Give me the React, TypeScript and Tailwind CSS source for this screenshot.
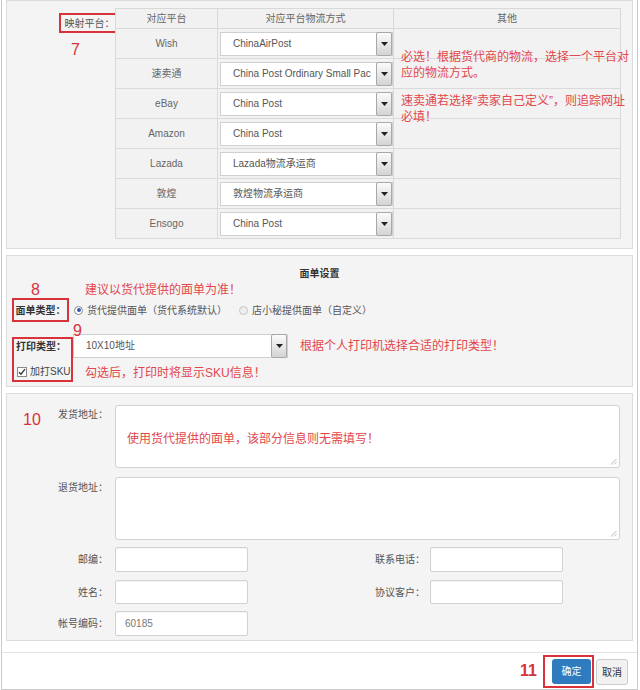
import React from "react";

const rows: [string, string][] = [
  ["Wish", "ChinaAirPost"],
  ["速卖通", "China Post Ordinary Small Pac"],
  ["eBay", "China Post"],
  ["Amazon", "China Post"],
  ["Lazada", "Lazada物流承运商"],
  ["敦煌", "敦煌物流承运商"],
  ["Ensogo", "China Post"],
];

function Caret() {
  return (
    <svg width="7" height="4" viewBox="0 0 7 4">
      <path d="M0 0h7L3.5 4z" fill="#222" />
    </svg>
  );
}

function Select({ value, className }: { value: string; className: string }) {
  return (
    <div className={`flex h-[24px] items-center border border-[#d0d0d0] bg-white ${className}`}>
      <span className="flex-1 overflow-hidden whitespace-nowrap pl-[12px] text-[10px] leading-[14px] text-[#555]">
        {value}
      </span>
      <span className="-my-[1px] flex h-[24px] w-[16px] shrink-0 items-center justify-center rounded-[2px] border border-[#a8a8a8] bg-gradient-to-b from-[#fbfbfb] to-[#d4d4d4]">
        <Caret />
      </span>
    </div>
  );
}

function Radio({ checked }: { checked: boolean }) {
  return checked ? (
    <span className="flex h-[9px] w-[9px] items-center justify-center rounded-full border border-[#8a8a8a] bg-white">
      <span className="h-[4px] w-[4px] rounded-full bg-[#2f5fa8]" />
    </span>
  ) : (
    <span className="block h-[9px] w-[9px] rounded-full border border-[#c4c4c4] bg-[#eeeeee]" />
  );
}

function Field({ className, value }: { className: string; value?: string }) {
  return (
    <div
      className={`flex items-center rounded-[2px] border border-[#d2d2d2] bg-white pl-[9px] text-[10px] text-[#777] shadow-[inset_0_1px_1px_rgba(0,0,0,0.05)] ${className}`}
    >
      {value}
    </div>
  );
}

function Grip() {
  return (
    <svg className="absolute bottom-[2px] right-[2px]" width="7" height="7" viewBox="0 0 7 7">
      <path d="M6.5 1L1 6.5M6.5 4L4 6.5" stroke="#b5b5b5" strokeWidth="1" />
    </svg>
  );
}

export default function App() {
  return (
    <div className="h-[690px] w-[640px] overflow-hidden bg-white pl-[1px] font-['Liberation_Sans','Noto_Sans_CJK_SC',sans-serif]">
      <div className="flex h-[690px] w-[637px] flex-col border-x border-b border-[#c9c9c9]">
        <div className="px-[4px]">
          {/* Section 1: mapping table */}
          <section className="flex h-[249px] border border-[#dcdcdc] bg-[#f4f4f5] pt-[7px]">
            <div className="flex w-[108px] shrink-0 flex-col items-end pt-[5px]">
              <div className="mr-[-5px] flex h-[20px] w-[61px] items-center justify-center border-2 border-[#d8323a] text-[10px] text-[#555]">
                映射平台：
              </div>
              <div className="mr-[35px] mt-[8px] text-[16px] leading-[18px] text-[#d8323a]">7</div>
            </div>
            <div className="relative">
              <table className="border-collapse text-[10px] text-[#666]">
                <thead>
                  <tr className="h-[20px] bg-[#f1f1f1]">
                    <th className="w-[102px] border border-[#d8d8d8] font-normal">对应平台</th>
                    <th className="w-[176px] border border-[#d8d8d8] font-normal">对应平台物流方式</th>
                    <th className="w-[227px] border border-[#d8d8d8] font-normal">其他</th>
                  </tr>
                </thead>
                <tbody>
                  {rows.map(([p, v]) => (
                    <tr key={p} className="h-[30px] bg-[#f2f2f2]">
                      <td className="border border-[#dadada] text-center">{p}</td>
                      <td className="border border-[#dadada] pl-[2px]">
                        <Select value={v} className="w-[173px]" />
                      </td>
                      <td className="border border-[#dadada]" />
                    </tr>
                  ))}
                </tbody>
              </table>
              <div className="absolute left-[286px] top-[41px] w-[230px] text-[12px] leading-[16px] text-[#e2474c]">
                必选！根据货代商的物流，选择一个平台对应的物流方式。
              </div>
              <div className="absolute left-[286px] top-[85px] w-[230px] text-[12px] leading-[16px] text-[#e2474c]">
                速卖通若选择“卖家自己定义”，则追踪网址必填！
              </div>
            </div>
          </section>

          {/* Section 2: 面单设置 */}
          <section className="mt-[6px] h-[132px] border border-[#dcdcdc] bg-[#f4f4f5] pt-[11px]">
            <div className="text-center text-[10px] font-bold leading-[14px] text-[#333]">面单设置</div>
            <div className="flex h-[17px] items-center pl-[24px]">
              <span className="w-[54px] text-[16px] leading-[17px] text-[#d8323a]">8</span>
              <span className="text-[12px] leading-[16px] text-[#e2474c]">建议以货代提供的面单为准！</span>
            </div>
            <div className="flex h-[24px] items-center pl-[5px]">
              <div className="flex h-[24px] w-[57px] items-center justify-center border-2 border-[#d8323a] text-[10px] font-bold text-[#333]">
                面单类型：
              </div>
              <span className="ml-[5px] flex">
                <Radio checked />
              </span>
              <span className="ml-[4px] text-[10px] text-[#555]">货代提供面单（货代系统默认）</span>
              <span className="ml-[12px] flex">
                <Radio checked={false} />
              </span>
              <span className="ml-[4px] text-[10px] text-[#555]">店小秘提供面单（自定义）</span>
            </div>
            <div className="mt-[12px] flex items-start pl-[5px]">
              <div className="relative mt-[3px] flex h-[45px] w-[61px] flex-col border-2 border-[#d8323a] pl-[2px] pt-[1px]">
                <span className="text-[10px] font-bold leading-[14px] text-[#333]">打印类型：</span>
                <span className="mt-[11px] flex items-center">
                  <span className="ml-[1px] flex h-[10px] w-[10px] items-center justify-center border border-[#888] bg-white">
                    <svg width="8" height="8" viewBox="0 0 8 8">
                      <path d="M1 4.2l2 2 4-5" stroke="#333" strokeWidth="1.3" fill="none" />
                    </svg>
                  </span>
                  <span className="ml-[3px] text-[10px] leading-[14px] text-[#444]">加打SKU</span>
                </span>
                <span className="absolute left-[59px] top-[-17px] text-[16px] leading-[18px] text-[#d8323a]">9</span>
              </div>
              <div className="flex flex-col">
                <div className="flex items-center">
                  <Select value="10X10地址" className="w-[215px]" />
                  <span className="ml-[12px] text-[12px] leading-[16px] text-[#e2474c]">
                    根据个人打印机选择合适的打印类型！
                  </span>
                </div>
                <span className="ml-[12px] mt-[7px] text-[12px] leading-[16px] text-[#e2474c]">
                  勾选后，打印时将显示SKU信息！
                </span>
              </div>
            </div>
          </section>

          {/* Section 3: addresses */}
          <section className="mt-[6px] h-[248px] border border-[#dcdcdc] bg-[#f4f4f5] pt-[11px] text-[10px] text-[#555]">
            <div className="flex">
              <div className="flex w-[101px] shrink-0 justify-between pl-[16px]">
                <span className="mt-[6px] text-[16px] leading-[18px] text-[#d8323a]">10</span>
                <span className="pt-[3px] leading-[14px]">发货地址：</span>
              </div>
              <div className="relative ml-[7px] h-[63px] w-[505px] rounded-[3px] border border-[#d2d2d2] bg-white pl-[11px] pt-[25px] text-[12px] leading-[16px] text-[#e2474c]">
                使用货代提供的面单，该部分信息则无需填写！
                <Grip />
              </div>
            </div>
            <div className="mt-[9px] flex">
              <div className="w-[101px] shrink-0 pt-[4px] text-right leading-[14px]">退货地址：</div>
              <div className="relative ml-[7px] h-[63px] w-[505px] rounded-[3px] border border-[#d2d2d2] bg-white">
                <Grip />
              </div>
            </div>
            <div className="mt-[7px] flex items-center">
              <div className="w-[101px] shrink-0 text-right">邮编：</div>
              <Field className="ml-[7px] h-[25px] w-[133px]" />
              <div className="w-[177px] text-right">联系电话：</div>
              <Field className="ml-[5px] h-[25px] w-[133px]" />
            </div>
            <div className="mt-[8px] flex items-center">
              <div className="w-[101px] shrink-0 text-right">姓名：</div>
              <Field className="ml-[7px] h-[24px] w-[133px]" />
              <div className="w-[177px] text-right">协议客户：</div>
              <Field className="ml-[5px] h-[24px] w-[133px]" />
            </div>
            <div className="mt-[7px] flex items-center">
              <div className="w-[101px] shrink-0 text-right">帐号编码：</div>
              <Field className="ml-[7px] h-[25px] w-[133px]" value="60185" />
            </div>
          </section>
        </div>

        {/* Footer */}
        <div className="mt-[11px] flex flex-1 items-start justify-end border-t border-[#e3e3e3] pr-[9px] pt-[2px]">
          <span className="mr-[6px] mt-[7px] text-[16px] font-bold leading-[18px] text-[#d8323a]">11</span>
          <div className="flex h-[33px] items-center border-2 border-[#d8323a] pl-[7px] pr-[1px]">
            <button className="h-[25px] w-[39px] rounded-[3px] bg-[#2f7bc0] text-[10px] text-white">确定</button>
          </div>
          <button className="ml-[2px] mt-[4px] h-[26px] w-[32px] rounded-[3px] border border-[#cccccc] bg-[#f2f2f2] text-[10px] text-[#333]">
            取消
          </button>
        </div>
      </div>
    </div>
  );
}
